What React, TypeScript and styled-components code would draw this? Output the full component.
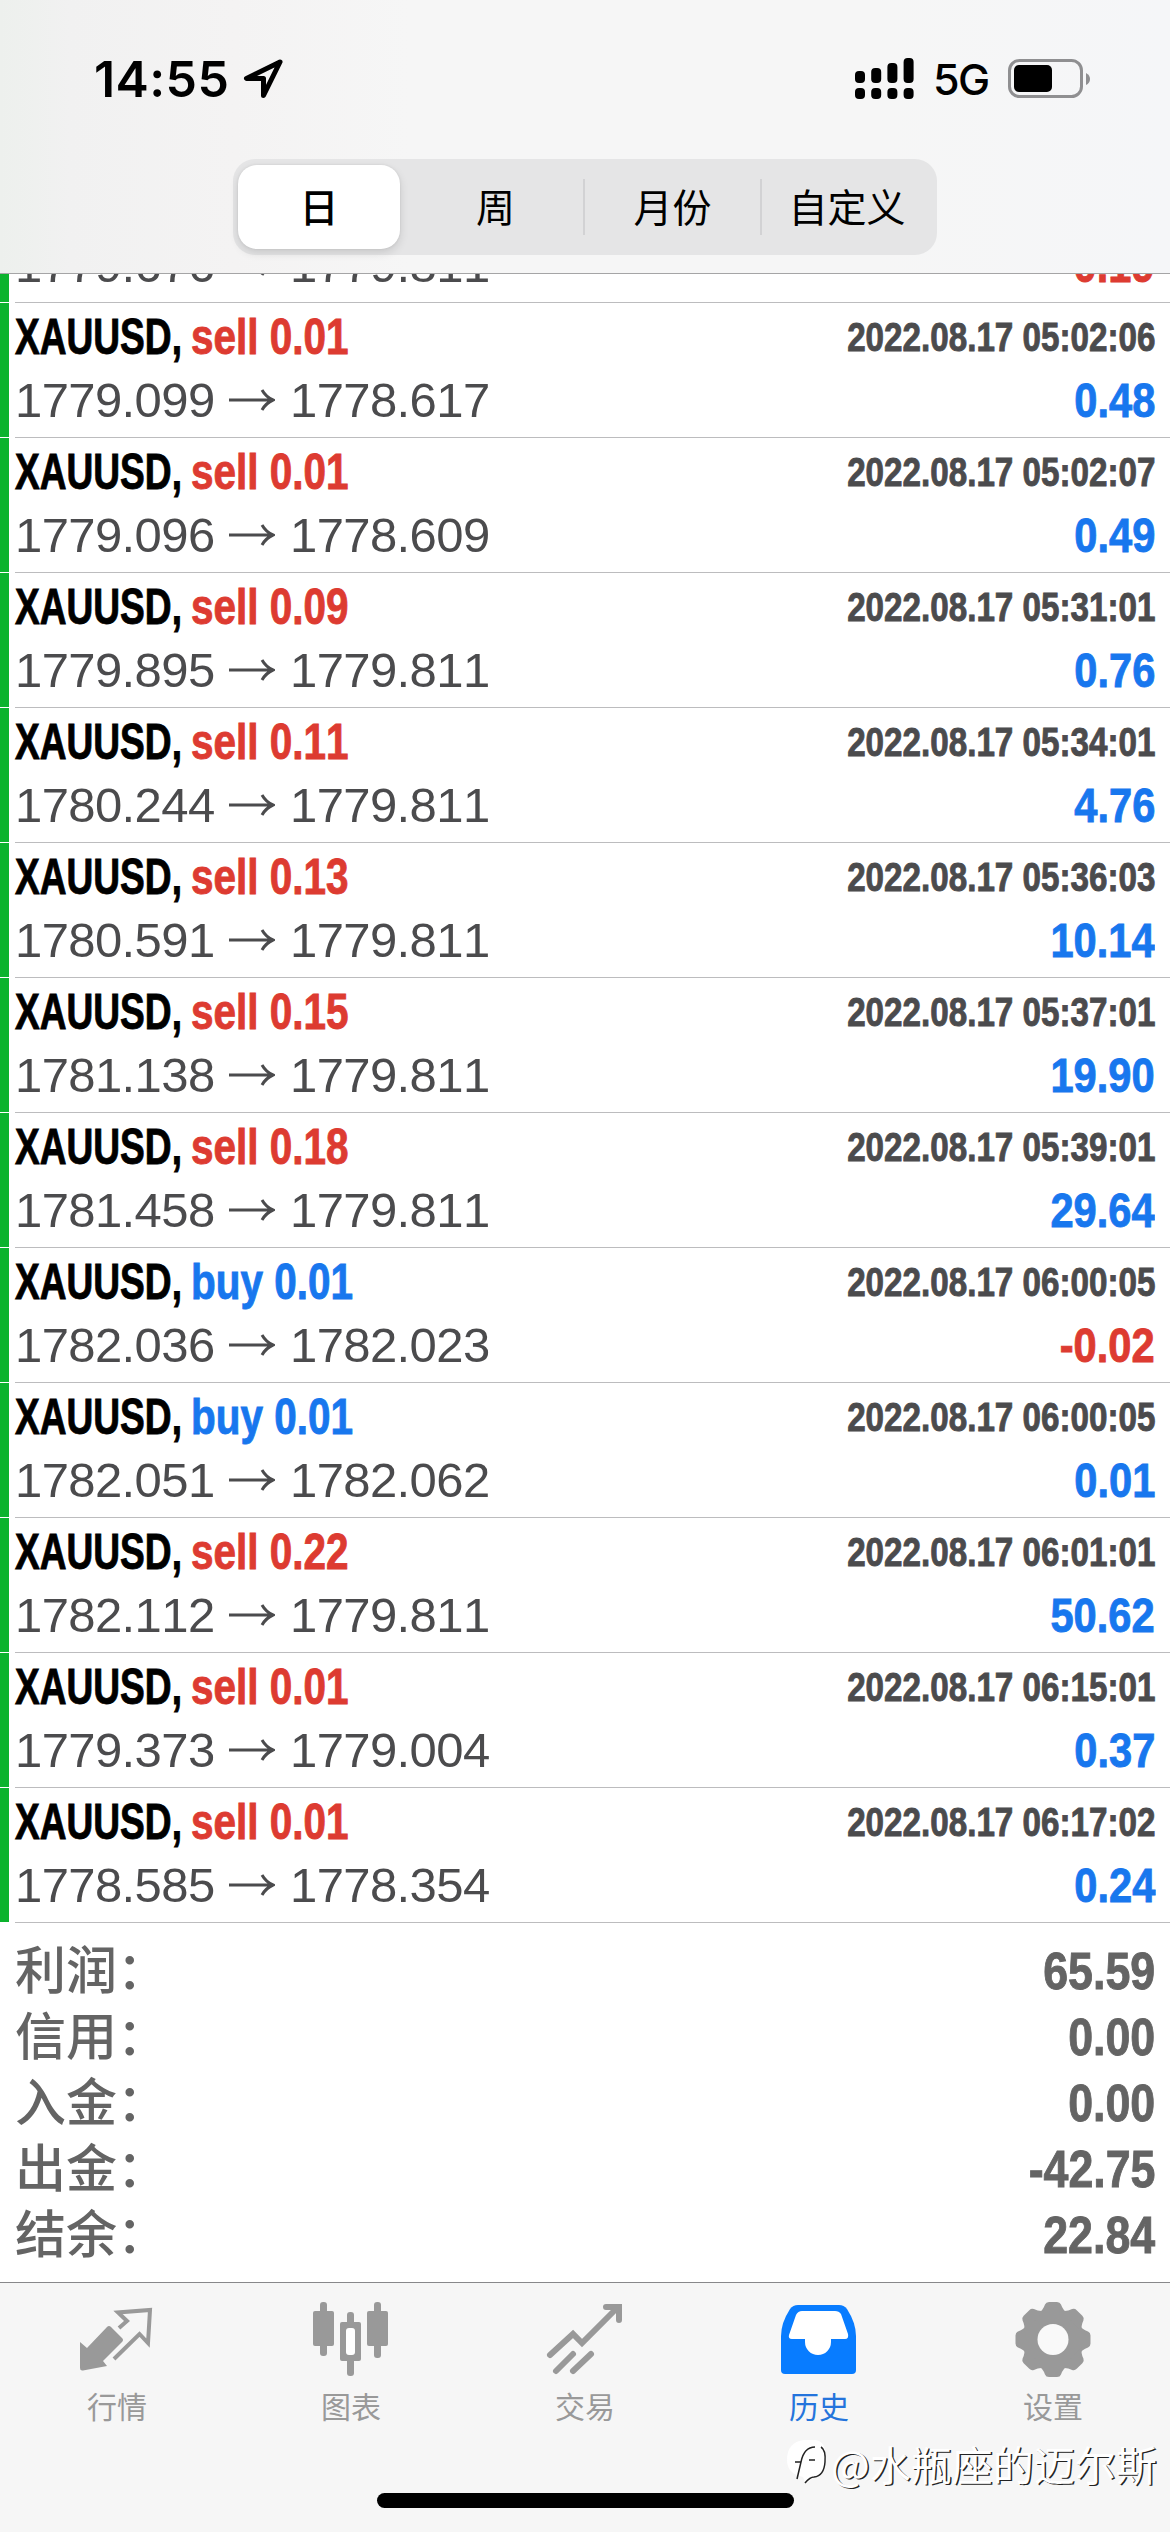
import React from 'react';
import styled, { createGlobalStyle } from 'styled-components';

const GlobalStyle = createGlobalStyle`
  *, *::before, *::after { box-sizing: border-box; }
  html, body { margin: 0; padding: 0; background: #fff; }
  body { font-family: "Liberation Sans", "Noto Sans CJK SC", sans-serif; font-kerning: none; }
`;

const RED = '#dd3b31';
const BLUE = '#1877ee';

const Screen = styled.div`
  width: 1170px;
  height: 2532px;
  display: flex;
  flex-direction: column;
  overflow: hidden;
  background: #fff;
`;

const Header = styled.header`
  flex: none;
  height: 274px;
  border-bottom: 1px solid #a5a5a6;
  background: linear-gradient(90deg, #edf0ed 0%, #f1f1f1 6%, #f4f3f3 20%, #f6f6f6 35%, #f6f6f6 75%, #f5f6f8 100%);
  display: flex;
  flex-direction: column;
`;

const StatusBar = styled.div`
  height: 159px;
  padding: 0 79px 0 94px;
  display: flex;
  justify-content: space-between;
`;

const StatusGroup = styled.div`
  height: 157px;
  display: flex;
  align-items: center;
`;

const Clock = styled.span`
  flex: none;
  width: 149px;
  font: 600 50px/60px Inter, sans-serif;
  letter-spacing: 0.4px;
  white-space: nowrap;
`;

const Network = styled.span`
  flex: none;
  width: 94px;
  padding-left: 19px;
  font: 500 43px/60px Inter, sans-serif;
  letter-spacing: -1.5px;
  white-space: nowrap;
`;

const Segments = styled.nav`
  align-self: center;
  width: 704px;
  height: 96px;
  padding: 0 5px;
  display: grid;
  grid-template-columns: 170px 177px 177px 170px;
  align-items: center;
  border-radius: 22px;
  background: #e5e5e6;
`;

const Segment = styled.button<{ $active?: boolean; $divided?: boolean }>`
  height: ${p => (p.$active ? '84px' : '56px')};
  margin-right: ${p => (p.$active ? '8px' : '0')};
  padding: 0 0 3px;
  border: 0;
  border-right: ${p => (p.$divided ? '2px solid #d2d2d4' : '0')};
  border-radius: ${p => (p.$active ? '19px' : '0')};
  background: ${p => (p.$active ? '#fff' : 'transparent')};
  box-shadow: ${p => (p.$active ? '0 4px 10px rgba(0,0,0,.12), 0 0 3px rgba(0,0,0,.08)' : 'none')};
  color: #000;
  font: ${p => (p.$active ? 500 : 400)} 39px/53px "Noto Sans CJK SC", sans-serif;
`;

const Deals = styled.main`
  flex: none;
  height: 1649px;
  display: flex;
  flex-direction: column;
  justify-content: flex-end;
  overflow: hidden;
`;

const Deal = styled.article`
  flex: none;
  height: 135px;
  display: grid;
  grid-template-columns: 9px 1fr;
  column-gap: 6px;
`;

const Stripe = styled.div`
  height: 134px;
  background: #0bb32d;
`;

const DealBody = styled.div`
  padding: 5px 15px 0 0;
  border-bottom: 1px solid #bcbcbe;
`;

const Line = styled.div<{ $height: number }>`
  height: ${p => p.$height}px;
  display: flex;
  justify-content: space-between;
  align-items: center;
`;

const Cluster = styled.div`
  display: flex;
  align-items: center;
`;

const Condensed = styled.span<{ $size: number; $scale: number; $color: string; $box?: number; $end?: boolean }>`
  display: block;
  width: ${p => (p.$box ? `${p.$box}px` : 'auto')};
  font-weight: 700;
  font-size: ${p => p.$size}px;
  line-height: 58px;
  white-space: nowrap;
  color: ${p => p.$color};
  -webkit-text-stroke: 0.9px ${p => p.$color};
  transform: scaleX(${p => p.$scale});
  transform-origin: ${p => (p.$end ? 'right' : 'left')} center;
`;

const Price = styled.span`
  flex: none;
  width: 199px;
  font-size: 49px;
  line-height: 58px;
  letter-spacing: -0.6px;
  white-space: nowrap;
  color: #4b4b4d;
`;

const ArrowBox = styled.svg`
  flex: none;
  width: 48px;
  height: 24px;
  margin: 0 15px 0 13px;
`;

const Totals = styled.section`
  flex: none;
  height: 359px;
  padding: 15px 15px 0 15px;
  display: flex;
  flex-direction: column;
`;

const TotalLabel = styled.span`
  margin-top: -8px;
  font: 500 51px/66px "Noto Sans CJK SC", sans-serif;
  color: #646464;
`;

const TabBar = styled.footer`
  position: relative;
  flex: none;
  height: 250px;
  border-top: 1px solid #88888a;
  background: #f6f6f6;
`;

const Tabs = styled.nav`
  display: grid;
  grid-template-columns: repeat(5, 1fr);
`;

const Tab = styled.button<{ $active?: boolean }>`
  height: 145px;
  padding: 17px 0 0;
  border: 0;
  background: none;
  display: flex;
  flex-direction: column;
  align-items: center;
  color: ${p => (p.$active ? '#2474dc' : '#999')};
  font: 400 30px/40px "Noto Sans CJK SC", sans-serif;
`;

const TabIcon = styled.svg`
  width: 80px;
  height: 80px;
  margin-bottom: 5px;
  overflow: visible;
`;

const HomeIndicator = styled.div`
  width: 417px;
  height: 15px;
  margin: 65px auto 0;
  border-radius: 8px;
  background: #000;
`;

const Watermark = styled.div`
  position: absolute;
  left: 786px;
  top: 155px;
  height: 50px;
  display: flex;
  align-items: center;
  color: #fff;
  font: 400 41px/50px "Noto Sans CJK SC", sans-serif;
  white-space: nowrap;
  text-shadow: 1.4px 1.2px 0 #222;
`;

type Row = [side: 'sell' | 'buy', lot: string, open: string, close: string, time: string, profit: string];

const rows: Row[] = [
  ['sell', '0.07', '1779.676', '1779.811', '2022.08.17 05:00:01', '-0.19'],
  ['sell', '0.01', '1779.099', '1778.617', '2022.08.17 05:02:06', '0.48'],
  ['sell', '0.01', '1779.096', '1778.609', '2022.08.17 05:02:07', '0.49'],
  ['sell', '0.09', '1779.895', '1779.811', '2022.08.17 05:31:01', '0.76'],
  ['sell', '0.11', '1780.244', '1779.811', '2022.08.17 05:34:01', '4.76'],
  ['sell', '0.13', '1780.591', '1779.811', '2022.08.17 05:36:03', '10.14'],
  ['sell', '0.15', '1781.138', '1779.811', '2022.08.17 05:37:01', '19.90'],
  ['sell', '0.18', '1781.458', '1779.811', '2022.08.17 05:39:01', '29.64'],
  ['buy', '0.01', '1782.036', '1782.023', '2022.08.17 06:00:05', '-0.02'],
  ['buy', '0.01', '1782.051', '1782.062', '2022.08.17 06:00:05', '0.01'],
  ['sell', '0.22', '1782.112', '1779.811', '2022.08.17 06:01:01', '50.62'],
  ['sell', '0.01', '1779.373', '1779.004', '2022.08.17 06:15:01', '0.37'],
  ['sell', '0.01', '1778.585', '1778.354', '2022.08.17 06:17:02', '0.24'],
];

const totals = [
  ['利润', '65.59'],
  ['信用', '0.00'],
  ['入金', '0.00'],
  ['出金', '-42.75'],
  ['结余', '22.84'],
];

function DealRow({ row }: { row: Row }) {
  const [side, lot, open, close, time, profit] = row;
  return (
    <Deal>
      <Stripe />
      <DealBody>
        <Line $height={58}>
          <Cluster>
            <Condensed $size={50} $scale={0.742} $color="#000" $box={176}>XAUUSD,</Condensed>
            <Condensed $size={50} $scale={0.81} $color={side === 'sell' ? RED : BLUE} $box={160}>{side} {lot}</Condensed>
          </Cluster>
          <Condensed $size={40} $scale={0.83} $color="#4b4b4d" $end>{time}</Condensed>
        </Line>
        <Line $height={68}>
          <Cluster>
            <Price>{open}</Price>
            <ArrowBox viewBox="0 0 48 24" fill="none" stroke="#4b4b4d" strokeWidth="3">
              <path d="M2 12H46M35 2Q39 9 46 12Q39 15 35 22" />
            </ArrowBox>
            <Price>{close}</Price>
          </Cluster>
          <Condensed $size={49} $scale={0.85} $color={profit.startsWith('-') ? RED : BLUE} $end>{profit}</Condensed>
        </Line>
      </DealBody>
    </Deal>
  );
}

const gearTeeth = [0, 45, 90, 135, 180, 225, 270, 315];

export default function App() {
  return (
    <Screen>
      <GlobalStyle />
      <Header>
        <StatusBar>
          <StatusGroup>
            <Clock>14:55</Clock>
            <svg width="42" height="42" viewBox="0 0 42 42" fill="none" stroke="#000" strokeWidth="5" strokeLinejoin="round">
              <path d="M37 4L3.500 20.500H20.500V37.500Z" />
            </svg>
          </StatusGroup>
          <StatusGroup>
            <svg width="59" height="42" viewBox="0 0 59 42">
              {[12, 15, 20, 25].map((h, i) => (
                <g key={h}>
                  <rect x={i * 16.2} y={25 - h} width="10" height={h} rx="4" />
                  <rect x={i * 16.2} y="30" width="10" height="11" rx="4" />
                </g>
              ))}
            </svg>
            <Network>5G</Network>
            <svg width="83" height="40" viewBox="0 0 83 40">
              <rect x="1.500" y="1.500" width="72" height="36" rx="10" fill="none" stroke="#8f8f91" strokeWidth="3" />
              <rect x="6" y="6" width="38" height="27" rx="5" />
              <path d="M78 14Q82 16 82 20T78 26Z" fill="#8f8f91" />
            </svg>
          </StatusGroup>
        </StatusBar>
        <Segments>
          <Segment $active>日</Segment>
          <Segment $divided>周</Segment>
          <Segment $divided>月份</Segment>
          <Segment>自定义</Segment>
        </Segments>
      </Header>
      <Deals>
        {rows.map((row, i) => <DealRow key={i} row={row} />)}
      </Deals>
      <Totals>
        {totals.map(([label, value]) => (
          <Line key={label} $height={66}>
            <TotalLabel>{label}：</TotalLabel>
            <Condensed $size={52} $scale={0.86} $color="#646464" $end>{value}</Condensed>
          </Line>
        ))}
      </Totals>
      <TabBar>
        <Tabs>
          <Tab>
            <TabIcon viewBox="77 2300 80 80" fill="#999">
              <path d="M80 2342L87 2348L107 2327Q109 2325 111 2327L122 2338Q124 2340 122 2342L103 2361L107 2366L83 2370.500Q80 2371 80 2368Z" />
              <path d="M119 2328L127 2321L118 2312.500L150 2310L148 2343L139.500 2334L114 2359" fill="none" stroke="#999" strokeWidth="4" />
            </TabIcon>
            行情
          </Tab>
          <Tab>
            <TabIcon viewBox="311 2300 80 80" fill="#999">
              <rect x="320" y="2302" width="7" height="54" rx="3" />
              <rect x="313" y="2311" width="21" height="35" rx="2" />
              <rect x="374" y="2302" width="7" height="56" rx="3" />
              <rect x="367" y="2311" width="21" height="35" rx="2" />
              <rect x="347" y="2312" width="7" height="64" rx="3" />
              <rect x="340" y="2322" width="21" height="39" rx="2" />
              <rect x="346" y="2328" width="9" height="27" rx="3" fill="#fff" />
            </TabIcon>
            图表
          </Tab>
          <Tab>
            <TabIcon viewBox="545 2300 80 80" fill="none" stroke="#999" strokeWidth="6" strokeLinecap="round">
              <path d="M550 2355L573 2334L582 2343L617 2308M606 2307H619V2320" />
              <path d="M556 2371L573 2354M573 2371L591 2354" />
            </TabIcon>
            交易
          </Tab>
          <Tab $active>
            <TabIcon viewBox="779 2300 80 80">
              <path fill="#087cff" fillRule="evenodd" d="M798 2305H839Q844 2305 847 2309Q856 2323 856 2336V2370Q856 2374 852 2374H785Q781 2374 781 2370V2336Q781 2323 790 2309Q793 2305 798 2305Z" />
              <path fill="#fff" d="M802 2311H835Q839 2311 841 2314L848 2334Q849 2339 845 2339H831V2342A13 13 0 0 1 805 2342V2339H792Q788 2339 789 2335L796 2315Q798 2311 802 2311Z" />
            </TabIcon>
            历史
          </Tab>
          <Tab>
            <TabIcon viewBox="-40 -39.500 80 80" fill="#999">
              <circle r="30" />
              {gearTeeth.map(a => (
                <path key={a} transform={`rotate(${a})`} d="M-15 -26Q-10 -29 -8 -35Q-7 -37.500 -4 -37.500H4Q7 -37.500 8 -35Q10 -29 15 -26Z" />
              ))}
              <circle r="15.500" fill="#f9f9f9" />
            </TabIcon>
            设置
          </Tab>
        </Tabs>
        <HomeIndicator />
        <Watermark>
          <svg width="45" height="50" viewBox="0 0 45 50" fill="none">
            <path d="M18 2H29Q40 3 40 20Q40 38 28 39L20 46L17 39Q1 36 1 22Q1 4 18 2Z" fill="#fff" />
            <path d="M9 24H15L11 41M15 24Q18 9 29 9M23 22H29M35 9Q40 12 39 24Q38 38 28 39Q24 39 19 45" stroke="#222" strokeWidth="1.500" />
          </svg>
          @水瓶座的迈尔斯
        </Watermark>
      </TabBar>
    </Screen>
  );
}
